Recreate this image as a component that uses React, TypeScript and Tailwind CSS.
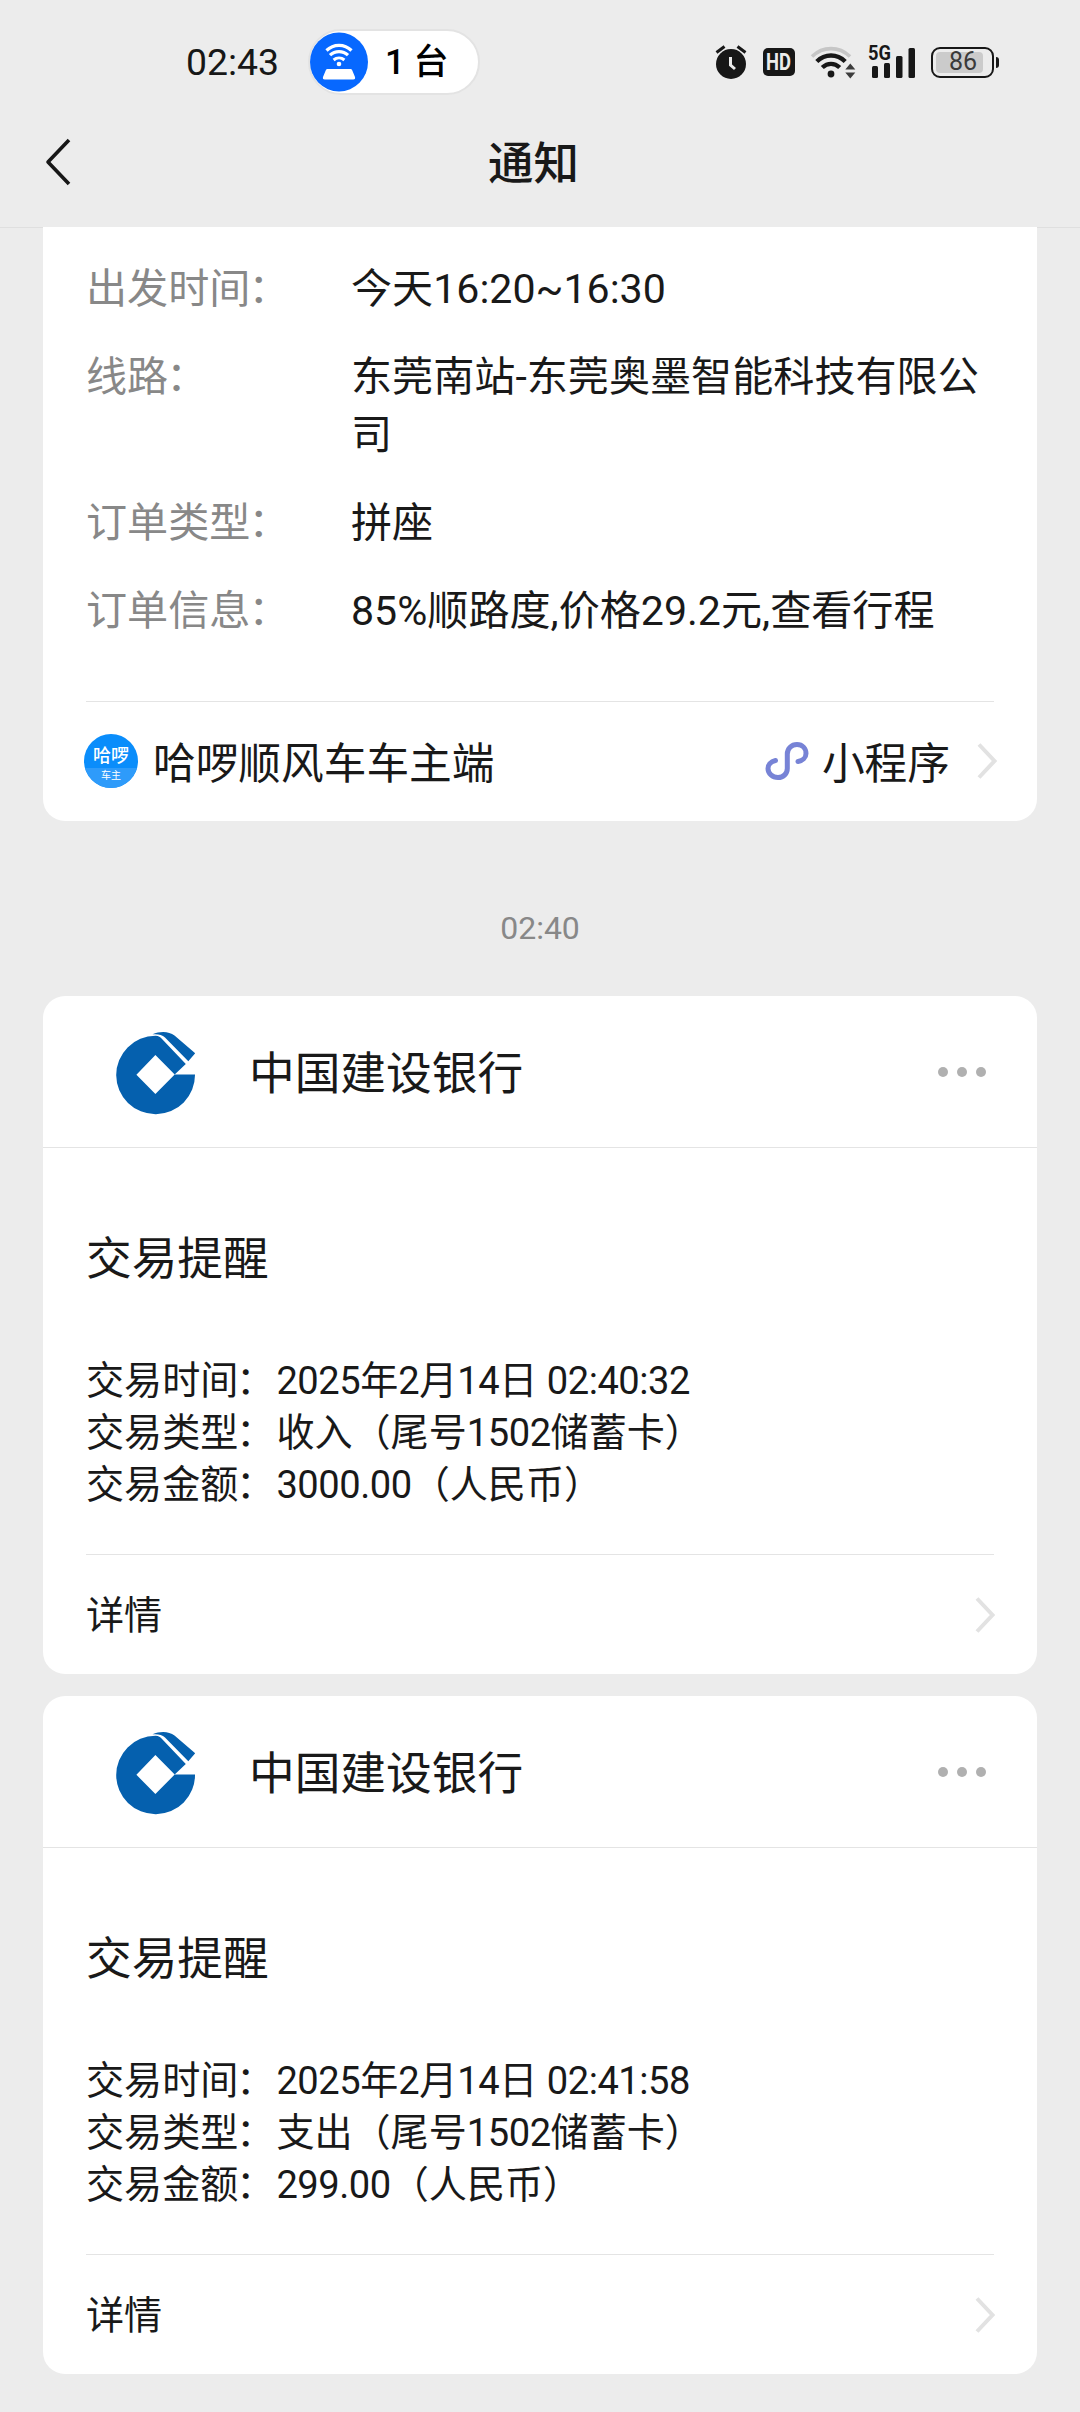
import React from "react";

type Txn = { time: string; kind: string; amount: string };

const transactions: Txn[] = [
  { time: "2025年2月14日 02:40:32", kind: "收入（尾号1502储蓄卡）", amount: "3000.00（人民币）" },
  { time: "2025年2月14日 02:41:58", kind: "支出（尾号1502储蓄卡）", amount: "299.00（人民币）" },
];

const tripRows = [
  { label: "出发时间", value: "今天16:20~16:30" },
  { label: "线路", value: "东莞南站-东莞奥墨智能科技有限公司" },
  { label: "订单类型", value: "拼座" },
  { label: "订单信息", value: "85%顺路度,价格29.2元,查看行程" },
];

function AlarmIcon() {
  return (
    <svg className="h-[36px] w-[32px] shrink-0" viewBox="0 0 32 36" fill="none">
      <circle cx="16" cy="20" r="15" fill="#171717" />
      <path d="M1.5 8.5 9.5 2.5M30.5 8.5 22.5 2.5" stroke="#171717" strokeWidth="3" />
      <path d="M15.5 13v8l4.5 4" stroke="#ececec" strokeWidth="3" />
    </svg>
  );
}

function WifiIcon() {
  return (
    <svg className="h-[36px] w-[46px] shrink-0" viewBox="0 0 46 36" fill="none">
      <path d="M2 12.5C13 2 29 2 40 12.5" stroke="#c6c6c6" strokeWidth="3.6" />
      <path d="M6.8 17.5C15 9.5 27 9.5 35.2 17.5" stroke="#171717" strokeWidth="4.4" />
      <path d="M12.3 23.5C17.5 18.6 24.5 18.6 29.7 23.5" stroke="#171717" strokeWidth="4.4" />
      <circle cx="21" cy="30" r="3.4" fill="#171717" />
      <path d="M40.3 19.5l5 6h-10zM40.3 34.5l5-6h-10z" fill="#3c3c3c" />
    </svg>
  );
}

function SignalIcon() {
  return (
    <div className="relative h-[36px] w-[48px] shrink-0">
      <svg className="h-full w-full" viewBox="0 0 48 36" fill="#171717">
        <rect x="4" y="22" width="6" height="12" rx="1.5" />
        <rect x="16" y="19" width="6" height="15" rx="1.5" />
        <rect x="28" y="12" width="6.5" height="22" rx="1.5" />
        <rect x="40.5" y="4" width="6.5" height="30" rx="1.5" />
      </svg>
      <span className="absolute top-0 left-0 origin-left scale-x-[0.87] text-[21px] leading-[18px] font-bold text-[#171717]">
        5G
      </span>
    </div>
  );
}

function HotspotIcon() {
  return (
    <svg className="h-[60px] w-[58px] shrink-0" viewBox="0 0 58 60" fill="none">
      <ellipse cx="29" cy="30" rx="29" ry="29.5" fill="#0768ff" />
      <path d="M16.5 18.5C23.5 11.6 34.5 11.6 41.5 18.5" stroke="#fff" strokeWidth="3.2" />
      <path d="M20 23.2C25.2 18.3 32.8 18.3 38 23.2" stroke="#fff" strokeWidth="3.2" />
      <path d="M23.6 28C26.8 25.2 31.2 25.2 34.4 28" stroke="#fff" strokeWidth="3" />
      <circle cx="29" cy="32" r="2.3" fill="#fff" />
      <path
        d="M17.5 37h23q1.2 0 1.7 1.2l2.8 6.8q.6 2.5-1.8 2.5h-28.4q-2.4 0-1.8-2.5l2.8-6.8q.5-1.2 1.7-1.2z"
        fill="#fff"
      />
    </svg>
  );
}

function StatusBar() {
  return (
    <div className="flex h-[124px] items-center">
      <span className="ml-[186px] w-[122px] pt-px text-[37.4px] text-[#171717]">02:43</span>
      <div className="flex h-[66px] w-[172px] items-center rounded-full border-2 border-[#e3e3e3] bg-white">
        <HotspotIcon />
        <span className="ml-[17px] pt-[2px] text-[35px] font-medium whitespace-pre text-black">1 台</span>
      </div>
      <div className="ml-[235px] flex items-center">
        <AlarmIcon />
        <div className="ml-[16px] flex h-[28px] w-[32px] items-center justify-center rounded-[5px] bg-[#171717] text-[23px] leading-none font-bold text-[#ececec]">
          <span className="scale-x-[0.8]">HD</span>
        </div>
        <div className="ml-[15px] flex">
          <WifiIcon />
        </div>
        <div className="ml-[12px] flex">
          <SignalIcon />
        </div>
        <div className="ml-[15px] flex h-[31px] w-[63px] items-center rounded-[9px] border-[2.5px] border-[#171717] px-[3px]">
          <div className="flex h-[21px] w-[47px] items-center justify-end rounded-[4px] bg-[#cbcbcb] pr-[6px] text-[25px] text-[#3a3a3a]">
            86
          </div>
        </div>
        <div className="ml-[2px] h-[11px] w-[3px] rounded-r-sm bg-[#171717]" />
      </div>
    </div>
  );
}

function Chevron() {
  return (
    <svg className="h-[38px] w-[22px] shrink-0" viewBox="0 0 22 38" fill="none">
      <path d="M2 2.5 17.5 19 2 35.5" stroke="#e2e2e2" strokeWidth="4" />
    </svg>
  );
}

function MiniProgramIcon() {
  return (
    <svg className="h-[40px] w-[44px] shrink-0" viewBox="0 0 44 40" fill="none">
      <path
        d="M10.5 19.5C5.5 20.5 3 24 3 27.5C3 32.5 7.5 36.5 13 36.5C18.5 36.5 22.3 32.5 22.3 27.5V13C22.3 7.5 26.5 3.5 32 3.5C37.5 3.5 41 7.5 41 12.5C41 16.5 37.5 19.8 33 20.5"
        stroke="#7783d6"
        strokeWidth="5"
        strokeLinecap="round"
      />
    </svg>
  );
}

function BankLogo() {
  return (
    <svg className="mt-[2px] h-[84px] w-[80px] shrink-0" viewBox="0 0 80 84">
      <path
        d="M39.5 4.8C42.5 4.7 44 6 46.500 8.500L69.800 33L58.700 43.500L39.400 24L20.400 43.800L39.400 63L58.700 43.500H79A39.400 39.200 0 1 1 39.500 4.800Z"
        fill="#0560ae"
      />
      <path
        d="M36.500 3.300C44-.2 53 0 58.500 4.500L79.200 22.200L72.300 30.200L49 6.500C46 3.500 41.500 2.800 36.500 3.300Z"
        fill="#0560ae"
      />
    </svg>
  );
}

/* Full-width colon set slightly closer to the label before it. */
function Colon() {
  return <span className="relative -left-[2px]">：</span>;
}

/* Digits and Latin punctuation are tracked a little tighter than the Chinese text. */
function MixedText({ text }: { text: string }) {
  const runs = text.split(/([0-9:.]+)/);
  return (
    <>
      {runs.map((run, i) => (i % 2 ? <span key={i} className="tracking-[-0.45px]">{run}</span> : run))}
    </>
  );
}

function TripCard() {
  return (
    <section className="mx-[43px] h-[593px] rounded-b-[22px] bg-white">
      <div className="flex h-[473px] flex-col gap-[30px] pt-[32px] pl-[43px]">
        {tripRows.map((row) => (
          <div key={row.label} className="flex text-[41.1px] leading-[58px]">
            <span className="w-[265px] shrink-0 text-[#888]">
              {row.label}
              <Colon />
            </span>
            <span className="w-[640px] break-all">{row.value}</span>
          </div>
        ))}
      </div>
      <div className="mx-[43px] flex h-[120px] items-center border-t border-[#e4e4e4]">
        <div className="-mt-[2px] -ml-[2px] flex h-[54px] w-[54px] shrink-0 flex-col items-center overflow-hidden rounded-full bg-[#0a8dfb] text-white">
          <span className="mt-[12px] text-[18px] leading-[20px] font-medium">哈啰</span>
          <span className="mt-[2px] w-full bg-[#2e9bfa] text-center text-[10px] leading-[16px]">车主</span>
          <span className="h-[10px] w-full bg-[#2e9bfa]" />
        </div>
        <span className="ml-[15px] pt-[5px] text-[42.7px]">哈啰顺风车车主端</span>
        <div className="ml-auto flex items-center">
          <MiniProgramIcon />
          <span className="ml-[13px] pt-[5px] text-[42.7px]">小程序</span>
          <div className="-mr-[5px] ml-[27px] flex">
            <Chevron />
          </div>
        </div>
      </div>
    </section>
  );
}

function BankCard({ txn }: { txn: Txn }) {
  return (
    <section className="mx-[43px] h-[678px] rounded-[22px] bg-white">
      <div className="flex h-[152px] items-center border-b border-[#e4e4e4] pl-[73px]">
        <BankLogo />
        <span className="ml-[53px] pt-[7px] text-[45.7px]">中国建设银行</span>
        <div className="mr-[51px] ml-auto flex gap-[9px]">
          <i className="h-[10px] w-[10px] rounded-full bg-[#b0b0b0]" />
          <i className="h-[10px] w-[10px] rounded-full bg-[#b0b0b0]" />
          <i className="h-[10px] w-[10px] rounded-full bg-[#b0b0b0]" />
        </div>
      </div>
      <div className="mx-[43px] h-[406px] pt-[78px]">
        <h2 className="text-[45.7px] leading-[68px]">交易提醒</h2>
        <div className="mt-[61px] text-[38.1px] leading-[52.2px]">
          <p>交易时间<Colon /><MixedText text={txn.time} /></p>
          <p>交易类型<Colon /><MixedText text={txn.kind} /></p>
          <p>交易金额<Colon /><MixedText text={txn.amount} /></p>
        </div>
      </div>
      <div className="mx-[43px] flex h-[120px] items-center justify-between border-t border-[#e4e4e4]">
        <span className="pt-[5px] text-[38.1px]">详情</span>
        <div className="-mr-[3px] flex">
          <Chevron />
        </div>
      </div>
    </section>
  );
}

export default function App() {
  return (
    <div className="h-[2412px] w-[1080px] overflow-hidden bg-[#ececec] font-[Roboto,'Noto_Sans_CJK_SC',sans-serif] text-[#191919]">
      <StatusBar />
      <header className="grid h-[103px] grid-cols-3 items-center">
        <svg className="-mt-[27px] ml-[44px] h-[48px] w-[28px]" viewBox="0 0 28 48" fill="none">
          <path d="M25 2 4 24 25 46" stroke="#171717" strokeWidth="3.6" strokeLinejoin="round" />
        </svg>
        <h1 className="-mt-[21px] -ml-[13px] text-center text-[45.5px] font-medium">通知</h1>
      </header>
      <div className="h-px bg-[#dfdfdf]">
        <div className="mx-[43px] h-px bg-white" />
      </div>
      <TripCard />
      <p className="flex h-[175px] items-center justify-center pt-[38px] text-[32px] text-[#888]">02:40</p>
      <div className="flex flex-col gap-[22px]">
        {transactions.map((txn) => (
          <BankCard key={txn.time} txn={txn} />
        ))}
      </div>
    </div>
  );
}
